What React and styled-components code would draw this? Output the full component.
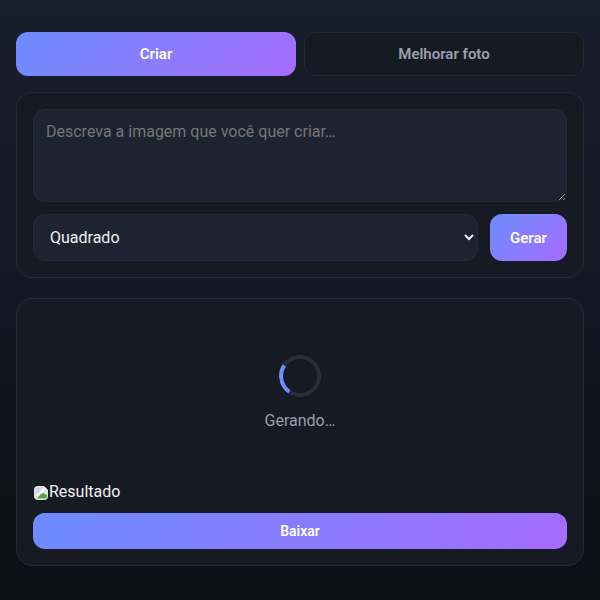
import React from "react";
import styled, { createGlobalStyle } from "styled-components";

const GlobalStyle = createGlobalStyle`
  * {
    box-sizing: border-box;
  }
  html,
  body {
    margin: 0;
    height: 600px;
    overflow: hidden;
  }
  body {
    background: linear-gradient(180deg, #181f2c 0%, #0e0f16 100%);
    font-family: Roboto, "Liberation Sans", sans-serif;
    color: #f0f0f0;
  }
`;

const accent = "linear-gradient(135deg, #6c8cff, #a66cff)";

const Page = styled.div`
  padding: 32px 16px 0;
  display: flex;
  flex-direction: column;
`;

const Tabs = styled.div`
  display: grid;
  grid-template-columns: 1fr 1fr;
  gap: 8px;
  margin-bottom: 16px;
`;

const Tab = styled.button`
  height: 44px;
  border-radius: 12px;
  border: ${(p) => (p.$active ? "none" : "1px solid #262a37")};
  background: ${(p) => (p.$active ? accent : "#161a23")};
  color: ${(p) => (p.$active ? "#ffffff" : "#9a9fad")};
  font-family: inherit;
  font-size: 15px;
  font-weight: 600;
`;

const Panel = styled.section`
  background: #161a23;
  border: 1px solid #262a37;
  border-radius: 16px;
  padding: 16px;
  margin-bottom: ${(p) => p.$gap || 0}px;
`;

const Prompt = styled.textarea`
  display: block;
  width: 100%;
  height: 93px;
  padding: 12px;
  background: #1e2331;
  border: 1px solid #262a37;
  border-radius: 12px;
  color: #f0f0f0;
  font-family: inherit;
  font-size: 16px;
  line-height: 1.2;
  resize: vertical;
  margin-bottom: 12px;

  &::placeholder {
    color: #757575;
    opacity: 1;
  }
`;

const Row = styled.div`
  display: flex;
  gap: 12px;
`;

const Format = styled.select`
  flex: 1;
  height: 47px;
  padding: 0 12px;
  background: #1e2331;
  border: 1px solid #262a37;
  border-radius: 12px;
  color: #f0f0f0;
  font-family: inherit;
  font-size: 16px;
`;

const Generate = styled.button`
  width: 77px;
  height: 47px;
  border: none;
  border-radius: 12px;
  background: ${accent};
  color: #ffffff;
  font-family: inherit;
  font-size: 15px;
  font-weight: 600;
`;

const Loader = styled.div`
  display: flex;
  flex-direction: column;
  align-items: center;
  padding: 40px 0;
  color: #9a9fad;
  font-size: 16px;
`;

const Spinner = styled.div`
  width: 42px;
  height: 42px;
  border-radius: 50%;
  border: 4px solid #2a2d3a;
  border-left-color: #6c8cff;
  transform: rotate(-11deg);
  margin-bottom: 14px;
`;

const Result = styled.div`
  display: flex;
  align-items: flex-end;
  height: 20px;
  margin: 11px 0 12px;
  font-size: 16px;
  line-height: 19px;
  color: #f0f0f0;
`;

const Download = styled.button`
  display: block;
  width: 100%;
  height: 36px;
  border: none;
  border-radius: 12px;
  background: ${accent};
  color: #ffffff;
  font-family: inherit;
  font-size: 14px;
  font-weight: 600;
`;

const BrokenImage = () => (
  <svg width="16" height="16" viewBox="0 0 16 16" aria-hidden="true">
    <path d="M5 1h6l4 4v6a4 4 0 0 1-4 4H5a4 4 0 0 1-4-4V5a4 4 0 0 1 4-4z" fill="#e4e6e8" />
    <path d="M5 2.5h5L2.5 10V5A2.5 2.5 0 0 1 5 2.5z" fill="#c9d6ea" />
    <path d="M4 13.5l3.5-4.5 3-1 3.5 2v1a2.5 2.5 0 0 1-2.5 2.5z" fill="#5aa53f" />
    <path d="M2 11.5 12 2.5l1.2 1.2L3.6 13z" fill="#f5f6f7" />
  </svg>
);

export default function App() {
  return (
    <>
      <GlobalStyle />
      <Page>
        <Tabs>
          <Tab $active>Criar</Tab>
          <Tab>Melhorar foto</Tab>
        </Tabs>
        <Panel $gap={20}>
          <Prompt placeholder="Descreva a imagem que você quer criar…" />
          <Row>
            <Format defaultValue="Quadrado">
              <option>Quadrado</option>
              <option>Retrato</option>
              <option>Paisagem</option>
            </Format>
            <Generate>Gerar</Generate>
          </Row>
        </Panel>
        <Panel>
          <Loader>
            <Spinner />
            Gerando…
          </Loader>
          <Result>
            <BrokenImage />
            Resultado
          </Result>
          <Download>Baixar</Download>
        </Panel>
      </Page>
    </>
  );
}
